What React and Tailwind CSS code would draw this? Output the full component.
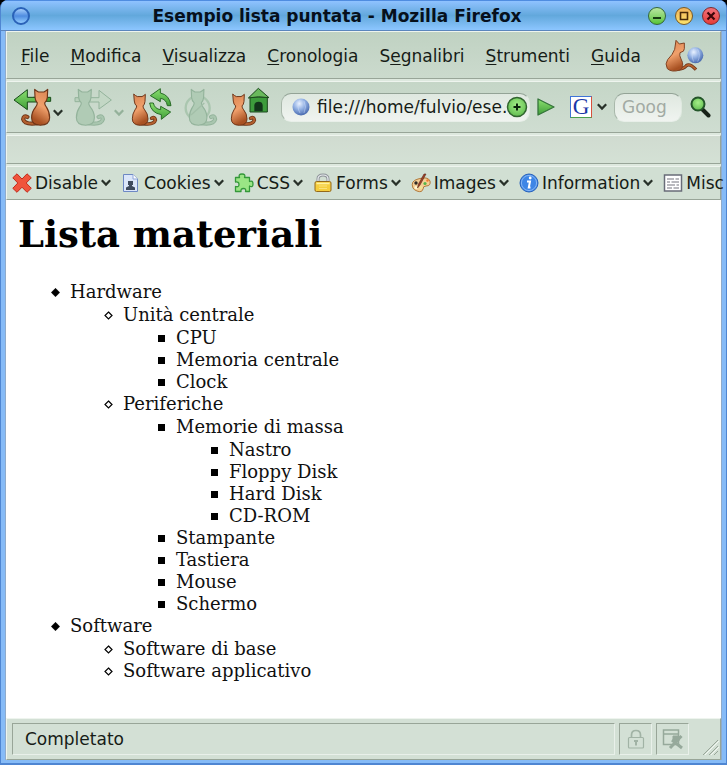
import React from "react";

const items = [
  {
    label: "Hardware",
    children: [
      {
        label: "Unità centrale",
        children: [{ label: "CPU" }, { label: "Memoria centrale" }, { label: "Clock" }],
      },
      {
        label: "Periferiche",
        children: [
          {
            label: "Memorie di massa",
            children: [
              { label: "Nastro" },
              { label: "Floppy Disk" },
              { label: "Hard Disk" },
              { label: "CD-ROM" },
            ],
          },
          { label: "Stampante" },
          { label: "Tastiera" },
          { label: "Mouse" },
          { label: "Schermo" },
        ],
      },
    ],
  },
  {
    label: "Software",
    children: [{ label: "Software di base" }, { label: "Software applicativo" }],
  },
];

function Marker({ level }) {
  return (
    <svg className="h-[9px] w-[9px] shrink-0" viewBox="0 0 9 9" aria-hidden="true">
      {level === 0 && <path d="M4.5 0.3 8.7 4.5 4.5 8.7 0.3 4.5Z" stroke="#000" strokeWidth="0.6" />}
      {level === 1 && <path d="M4.5 1 8 4.5 4.5 8 1 4.5Z" fill="none" stroke="#000" strokeWidth="1.2" />}
      {level > 1 && <path d="M1 1h7v7h-7z" />}
    </svg>
  );
}

function List({ entries, level = 0 }) {
  return (
    <ul className={level === 0 ? "pl-[33px]" : "mt-px pl-[53px]"}>
      {entries.map((e) => (
        <li key={e.label}>
          <div className="flex items-center gap-[10px]">
            <Marker level={level} />
            <span>{e.label}</span>
          </div>
          {e.children && <List entries={e.children} level={level + 1} />}
        </li>
      ))}
    </ul>
  );
}

const CAT =
  "M6 2 Q10 6 16 9 H30 Q36 6 40 2 L39 24 Q38 34 33 38 Q33 44 38 50 Q48 62 48 78 Q48 97 25 98 Q1 97 1 78 Q1 62 9 50 Q14 44 14 38 Q8 34 7 24Z";
const TAIL = "M30 92 Q66 98 70 82 Q69 70 59 76";

function Defs() {
  return (
    <svg className="absolute h-0 w-0" aria-hidden="true">
      <defs>
        <linearGradient id="fur" x1="0" y1="0" x2="0.3" y2="1">
          <stop offset="0" stopColor="#d98350" />
          <stop offset="0.55" stopColor="#f0a06c" />
          <stop offset="1" stopColor="#a85122" />
        </linearGradient>
        <linearGradient id="leaf" x1="0" y1="0" x2="0" y2="1">
          <stop offset="0" stopColor="#8be070" />
          <stop offset="1" stopColor="#3f9e38" />
        </linearGradient>
        <radialGradient id="globe" cx="0.4" cy="0.3" r="0.75">
          <stop offset="0" stopColor="#e9f1ff" />
          <stop offset="0.45" stopColor="#94b2e4" />
          <stop offset="1" stopColor="#3f61a8" />
        </radialGradient>
        <radialGradient id="plus" cx="0.5" cy="0.4" r="0.6">
          <stop offset="0" stopColor="#a4ee88" />
          <stop offset="1" stopColor="#62bd50" />
        </radialGradient>
      </defs>
    </svg>
  );
}

function Cat({ transform, off }) {
  return (
    <g transform={transform} strokeLinejoin="round" strokeLinecap="round">
      <path d={TAIL} fill="none" stroke={off ? "#93b39b" : "#6e3518"} strokeWidth="11" />
      <path d={TAIL} fill="none" stroke={off ? "#a9c6af" : "#b3602f"} strokeWidth="6" />
      <path d={CAT} fill={off ? "#b0cbb5" : "url(#fur)"} stroke={off ? "#93b39b" : "#6e3518"} strokeWidth="3" />
    </g>
  );
}

function BackIcon() {
  return (
    <svg className="h-[40px] w-[40px]" viewBox="36 34 120 120" aria-hidden="true">
      <path d="M100 65h52v12h-52z" fill="#45a03c" stroke="#174b19" strokeWidth="3" />
      <path d="M42 73 82 42V65H112V79H82V102Z" fill="url(#leaf)" stroke="#174b19" strokeWidth="3" strokeLinejoin="round" />
      <Cat transform="translate(150 39) scale(-1.15 1.12)" />
    </svg>
  );
}

function ForwardIcon() {
  return (
    <svg className="h-[40px] w-[40px]" viewBox="222 34 120 120" aria-hidden="true">
      <path d="M228 66h20v12h-20z" fill="#b9d0bc" stroke="#93b39b" strokeWidth="3" />
      <path d="M268 66H300V44L337 73 300 100V79H268Z" fill="#c3d7c5" stroke="#93b39b" strokeWidth="3" strokeLinejoin="round" />
      <Cat off transform="translate(231 39) scale(1.15 1.12)" />
    </svg>
  );
}

function ReloadIcon() {
  return (
    <svg className="h-[40px] w-[42px]" viewBox="392 34 126 120" aria-hidden="true">
      <Cat transform="translate(395 54) scale(1 .97)" />
      <path d="M480 52Q508 58 512 90H501Q498 70 480 68V78L450 60 480 39Z" fill="url(#leaf)" stroke="#296b27" strokeWidth="3" strokeLinejoin="round" />
      <path d="M448 82H459Q463 100 481 102V92L511 109 483 131V117Q452 112 448 82Z" fill="url(#leaf)" stroke="#296b27" strokeWidth="3" strokeLinejoin="round" />
    </svg>
  );
}

function StopIcon() {
  return (
    <svg className="h-[40px] w-[36px]" viewBox="550 34 108 120" aria-hidden="true">
      <circle cx="594" cy="97" r="36" fill="none" stroke="#aac6af" strokeWidth="7" />
      <Cat off transform="translate(568 39) scale(1.12)" />
      <path d="M574 118 614 82" stroke="#a3bfa8" strokeWidth="4" />
    </svg>
  );
}

function HomeIcon() {
  return (
    <svg className="h-[40px] w-[40px]" viewBox="692 34 120 120" aria-hidden="true">
      <Cat transform="translate(695 54) scale(1 .97)" />
      <path d="M752 64H804V109H752Z" fill="#3d9c3c" stroke="#1b481d" strokeWidth="3" />
      <path d="M777 38 809 66Q777 60 747 67Z" fill="#69b95c" stroke="#1b481d" strokeWidth="3" strokeLinejoin="round" />
      <path d="M765 107V88Q767 78 778 78T790 88V107Z" fill="#12351a" />
    </svg>
  );
}

function Mascot() {
  return (
    <svg className="h-[34px] w-[40px]" viewBox="912 120 120 102" aria-hidden="true">
      <path d="M950 210Q968 210 976 200 986 192 1005 212" fill="none" stroke="#6e3518" strokeWidth="10" />
      <path d="M950 210Q968 210 976 200 986 192 1004 211" fill="none" stroke="#b8622d" strokeWidth="5" />
      <path d="M945 124 955 135 970 132 970 149Q971 158 957 161 954 169 960 180 972 201 957 213 932 221 919 209 911 194 920 182 936 166 941 151Z" fill="url(#fur)" stroke="#814323" strokeWidth="3" strokeLinejoin="round" />
      <circle cx="1003" cy="169" r="24" fill="url(#globe)" />
      <path d="M999 150Q988 166 998 188M1010 151Q1020 168 1010 188" fill="none" stroke="#dce8ff" strokeWidth="3" opacity=".4" />
    </svg>
  );
}

function Chevron({ off }) {
  return (
    <svg className="h-[10px] w-[10px] shrink-0" viewBox="0 0 10 10" aria-hidden="true">
      <path d="M0.8 2.2 5 6.6 9.2 2.2" fill="none" stroke={off ? "#94b19a" : "#283129"} strokeWidth="2.2" />
    </svg>
  );
}

const menus = [
  ["", "F", "ile"],
  ["", "M", "odifica"],
  ["", "V", "isualizza"],
  ["", "C", "ronologia"],
  ["S", "e", "gnalibri"],
  ["", "S", "trumenti"],
  ["", "G", "uida"],
];

function ToolIcon({ name }) {
  return (
    <svg className="h-[20px] w-[20px] shrink-0" viewBox="0 0 20 20" aria-hidden="true">
      {name === "Disable" && (
        <path d="M5 .8 10 6 15 .8 19.3 4.8 14.2 10 19.3 15.3 15 19.3 10 14.2 5 19.3 .8 15.3 5.8 10 .8 4.8Z" fill="#f0543c" stroke="#c22a1c" strokeLinejoin="round" />
      )}
      {name === "Cookies" && (
        <>
          <path d="M2.5 1.5H12L16.5 6V18.5H2.5Z" fill="#dbe6fa" stroke="#6d88c4" />
          <path d="M12 1.5V6H16.5" fill="#fff" stroke="#8fa5d6" />
          <path d="M7 8H12V12H11V13L14 14.5V17H5V14.5L8 13V12H7Z" fill="#3f4b5e" />
        </>
      )}
      {name === "CSS" && (
        <path d="M1.5 4.5H5.5Q4 1 8 1T10.5 4.5H15.5V8.5Q19 7 19 11T15.5 13V18.5H11.5Q12.5 15.5 9.5 15.5T7 18.5H1.5V13.5Q5 14.5 5 11.5T1.5 9Z" fill="#9be585" stroke="#34983a" strokeWidth="1.3" strokeLinejoin="round" />
      )}
      {name === "Forms" && (
        <>
          <path d="M5 9V6Q5 2 10 2T15 6V9" fill="none" stroke="#8d9298" strokeWidth="3" />
          <path d="M5 9V6Q5 2 10 2T15 6V9" fill="none" stroke="#e9edf0" strokeWidth="1.2" />
          <rect x="2" y="8.5" width="16" height="10" rx="1.5" fill="#f5ce3e" stroke="#94691a" />
          <path d="M3.5 10.5H16.5" stroke="#fff1a2" strokeWidth="1.5" />
          <path d="M6 13H14M6 15.5H14" stroke="#fae27a" />
        </>
      )}
      {name === "Images" && (
        <>
          <path d="M2 15Q-1 8 7 6 17 3 19 8 20 13 15 13 12 13 12 16 11 20 6 18 3 17 2 15Z" fill="#f4cf96" stroke="#b1793a" />
          <circle cx="5" cy="10" r="1.7" fill="#2e2926" />
          <circle cx="10" cy="14.5" r="1.7" fill="#f2e39a" />
          <circle cx="14" cy="10.5" r="1.6" fill="#56b449" />
          <circle cx="5" cy="14.5" r="1.5" fill="#fff9d6" />
          <circle cx="16.5" cy="7.5" r="1.2" fill="#ef7b2c" />
          <path d="M15 1 9 12 6.5 15 7.5 11 13 1Z" fill="#9f3e24" stroke="#5b2a1d" strokeWidth=".6" />
        </>
      )}
      {name === "Information" && (
        <>
          <circle cx="10" cy="10" r="9" fill="#3e86e6" stroke="#2862bb" />
          <circle cx="10" cy="10" r="7.6" fill="none" stroke="#86b6f4" />
          <path d="M8 8.5H11L9.8 14.5H11.5" fill="none" stroke="#fff" strokeWidth="2" />
          <circle cx="11.2" cy="5" r="1.4" fill="#fff" />
        </>
      )}
      {name === "Misc" && (
        <>
          <path d="M1.5 2H18.5V18H1.5Z" fill="#fff" stroke="#686c78" strokeWidth="1.5" />
          <path d="M4 6H11M12.5 6H16M4 9H7M8.5 9H16M4 12H12M13.5 12H16M4 15H9M10.5 15H16" stroke="#74757f" strokeWidth="1.2" />
        </>
      )}
    </svg>
  );
}

const tools = ["Disable", "Cookies", "CSS", "Forms", "Images", "Information", "Misc"];

function WindowButton({ label, children, className }) {
  return (
    <button aria-label={label} className={`flex h-[18px] w-[18px] items-center justify-center rounded-full border ${className}`}>
      <svg className="h-3 w-3" viewBox="0 0 12 12" fill="none" strokeWidth="2" aria-hidden="true">
        {children}
      </svg>
    </button>
  );
}

const bar = "border border-t-[#eef4ee] border-l-[#eef4ee] border-r-[#98a598] border-b-[#98a598]";
const well = "border border-t-[#98a598] border-r-[#e9f0ea] border-b-[#e9f0ea] border-l-[#98a598]";
const field = "rounded-[10px] border border-t-[#93a396] border-r-[#dfe9e0] border-b-[#e8efe9] border-l-[#a9b8ab] bg-linear-to-b from-[#dfe8e0] to-[#f0f4f0]";

export default function App() {
  return (
    <div className="bg-black font-['DejaVu_Sans',sans-serif] text-[17px] leading-5 text-[#161c17]">
      <Defs />
      <div className="flex min-h-screen flex-col overflow-hidden rounded-t-lg border-x border-b-2 border-[#4f86d2] bg-[#6aa9f0]">
        <header className="flex h-[31px] items-center border-t border-b border-t-[#4f8ce0] border-b-[#5b86bd] bg-linear-to-b from-[#8fc2ff] via-[#62a8dc] to-[#8cc6ff] px-[11px]">
          <button aria-label="Menu finestra" className="h-[18px] w-[18px] rounded-full border-2 border-[#2a62b8] bg-linear-to-b from-[#a5cdfb] via-[#4f8ce0] to-[#93cdff]" />
          <h1 className="flex-1 pr-1 text-center font-bold whitespace-nowrap text-[#06101c]">Esempio lista puntata - Mozilla Firefox</h1>
          <div className="-mr-[5px] flex gap-[9px]">
            <WindowButton label="Riduci" className="border-[#34663a] bg-linear-to-b from-[#b9e6a0] to-[#55c433]">
              <path d="M2 8H10" stroke="#173b12" />
            </WindowButton>
            <WindowButton label="Ingrandisci" className="border-[#7a5a24] bg-linear-to-b from-[#f2b35c] to-[#fbe36a]">
              <path d="M2.5 2.5H9.5V9.5H2.5Z" stroke="#4a2b0a" strokeWidth="1.6" />
            </WindowButton>
            <WindowButton label="Chiudi" className="border-[#7c2b30] bg-linear-to-b from-[#f0707a] to-[#e63a36]">
              <path d="M2.5 2.5 9.5 9.5M9.5 2.5 2.5 9.5" stroke="#3c0508" strokeWidth="2.2" />
            </WindowButton>
          </div>
        </header>

        <div className="flex flex-1 flex-col border-x-4 border-b-[3px] border-x-[#86bbf7] border-b-[#86bbf7]">
          <div className="flex flex-1 flex-col border-x border-[#8fabcb] bg-[#dde8de]">
            <nav className={`flex h-[48px] items-center justify-between bg-linear-to-b from-[#c0d2c2] to-[#cbdacd] pt-px pr-[15px] pl-[14px] ${bar}`}>
              <div className="flex gap-[21px]">
                {menus.map(([a, b, c]) => (
                  <button key={b + c}>
                    {a}
                    <span className="underline underline-offset-2">{b}</span>
                    {c}
                  </button>
                ))}
              </div>
              <Mascot />
            </nav>

            <div className={`mt-[2px] flex h-[52px] items-center bg-linear-to-b from-[#c5d6c7] to-[#cfddd1] pr-[9px] pl-[5px] ${bar}`}>
              <button aria-label="Indietro" className="flex items-center gap-px"><BackIcon /><span className="pt-3"><Chevron /></span></button>
              <button aria-label="Avanti" className="ml-[10px] flex items-center gap-px"><ForwardIcon /><span className="pt-3"><Chevron off /></span></button>
              <button aria-label="Ricarica" className="ml-[7px]"><ReloadIcon /></button>
              <button aria-label="Ferma" className="ml-[10px]"><StopIcon /></button>
              <button aria-label="Pagina iniziale" className="ml-[11px]"><HomeIcon /></button>
              <div className={`ml-[11px] flex h-[29px] min-w-0 flex-1 items-center pr-px pl-[10px] ${field}`}>
                <svg className="h-[18px] w-[18px] shrink-0" viewBox="0 0 18 18" aria-hidden="true">
                  <circle cx="9" cy="9" r="8.5" fill="url(#globe)" />
                  <path d="M8 2Q4 8 8 15M12 3Q15 9 12 15" fill="none" stroke="#dce8ff" opacity=".4" />
                </svg>
                <input aria-label="Indirizzo" className="ml-[7px] min-w-0 flex-1 bg-transparent outline-none" defaultValue="file:///home/fulvio/ese." />
                <button aria-label="Aggiungi">
                  <svg className="h-[22px] w-[22px]" viewBox="0 0 22 22" aria-hidden="true">
                    <circle cx="11" cy="11" r="9.5" fill="url(#plus)" stroke="#31652f" strokeWidth="1.5" />
                    <path d="M11 7.5V14.5M7.5 11H14.5" stroke="#0c240c" strokeWidth="2" />
                  </svg>
                </button>
              </div>
              <button aria-label="Vai" className="ml-[6px]">
                <svg className="h-[20px] w-[20px]" viewBox="0 0 20 20" aria-hidden="true">
                  <path d="M2 2 18 10 2 18Z" fill="url(#leaf)" stroke="#34733a" strokeWidth="1.3" strokeLinejoin="round" />
                </svg>
              </button>
              <button aria-label="Motore di ricerca" className="ml-[14px] flex items-center gap-[5px]">
                <span className="flex h-[22px] w-[22px] items-center justify-center border border-t-[#3f74d8] border-r-[#d8503c] border-b-[#4aa04c] border-l-[#3f74d8] bg-white font-['Liberation_Serif',serif] text-[23px] leading-[18px] text-[#1c38a8]">G</span>
                <Chevron />
              </button>
              <input aria-label="Cerca" placeholder="Goog" className={`ml-[7px] h-[29px] w-[68px] pl-[7px] outline-none placeholder:text-[#a2aaa3] ${field}`} />
              <button aria-label="Avvia ricerca" className="ml-[7px]">
                <svg className="h-[22px] w-[22px]" viewBox="0 0 22 22" aria-hidden="true">
                  <path d="M13 13 19.5 19.5" stroke="#182218" strokeWidth="4" strokeLinecap="round" />
                  <circle cx="9" cy="8" r="6.5" fill="url(#plus)" stroke="#24562a" strokeWidth="2" />
                </svg>
              </button>
            </div>

            <div className={`mt-[2px] h-[29px] bg-linear-to-b from-[#d0dbd0] to-[#d4e1d5] ${bar}`} />

            <div className={`mt-[2px] flex h-[34px] items-center gap-[10px] bg-[#d1dfd3] pl-[5px] ${bar}`}>
              {tools.map((t) => (
                <button key={t} className="flex shrink-0 items-center gap-[3px]">
                  <ToolIcon name={t} />
                  <span>{t}</span>
                  {t !== "Misc" && <Chevron />}
                </button>
              ))}
            </div>

            <main className="flex-1 bg-white px-[12px] pt-[11px] pb-[34px] font-['DejaVu_Serif',serif] text-[18px] leading-[22px] text-[#101010]">
              <h2 className="mb-[24px] text-[37px] leading-[46px] font-bold text-black">Lista materiali</h2>
              <List entries={items} />
            </main>

            <footer className={`flex h-[42px] items-stretch gap-[4px] bg-[#d3e0d5] py-[4px] pr-px pl-[5px] ${bar}`}>
              <div className={`flex flex-1 items-center pl-[12px] ${well}`}>Completato</div>
              <div className={`flex w-[33px] items-center justify-center ${well}`}>
                <svg className="h-[20px] w-[18px]" viewBox="0 0 18 20" fill="none" stroke="#a1b3a5" aria-hidden="true">
                  <path d="M4.5 9V6Q4.5 1.5 9 1.5T13.5 6V9" strokeWidth="1.7" />
                  <rect x="1.5" y="8.5" width="15" height="10.5" rx="1" strokeWidth="1.2" />
                  <path d="M9 11.5V16.5M7 12H11" strokeWidth="2" />
                </svg>
              </div>
              <div className={`flex w-[33px] items-center justify-center ${well}`}>
                <svg className="h-[22px] w-[22px]" viewBox="0 0 22 22" fill="none" stroke="#96a99b" aria-hidden="true">
                  <path d="M1.5 2H16.5V16.5H1.5ZM1.5 6H16.5" strokeWidth="1.5" />
                  <path d="M11 8H17V13H11Z" fill="#96a99b" />
                  <path d="M19.5 8 8 20M10 12 20 20" strokeWidth="3" />
                </svg>
              </div>
              <svg className="ml-[10px] h-[16px] w-[16px] self-end" viewBox="0 0 16 16" fill="none" aria-hidden="true">
                <path d="M0 16 15 1M6 16 15 7M11 16 15 12" stroke="#98a598" />
                <path d="M2 16 16 2M8 16 16 8" stroke="#f2f7f2" />
              </svg>
            </footer>
          </div>
        </div>
      </div>
    </div>
  );
}
